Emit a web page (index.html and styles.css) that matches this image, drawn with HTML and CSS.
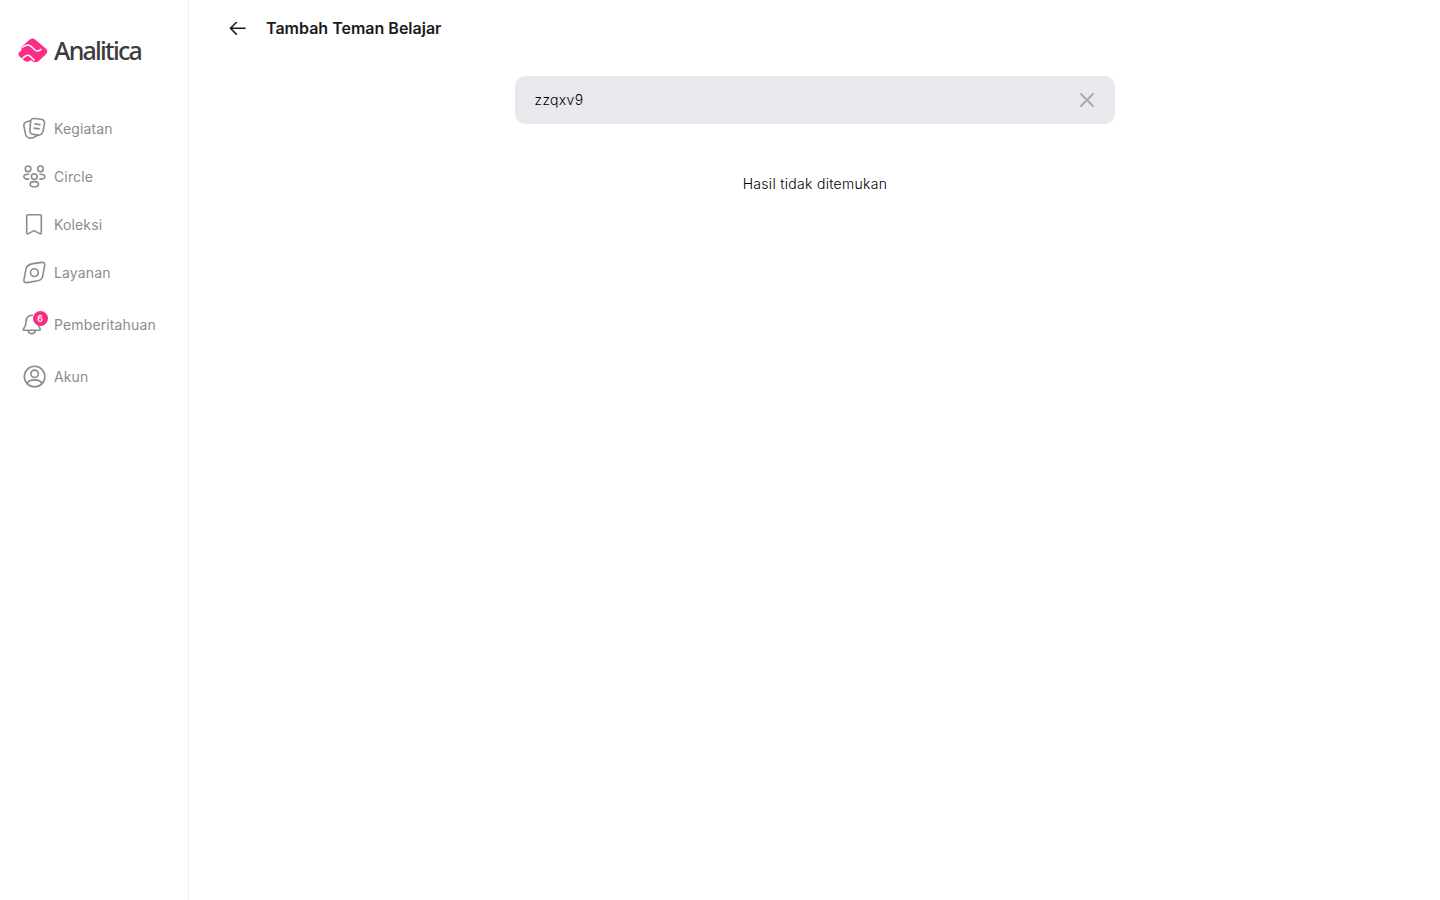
FILE: index.html
```html
<!DOCTYPE html>
<html lang="id">
<head>
    <meta charset="UTF-8">
    <meta name="viewport" content="width=device-width, initial-scale=1.0">
    <title>Tambah Teman Belajar - Analitica</title>
    <link rel="stylesheet" href="styles.css">
</head>
<body>
    <aside class="sidebar">
        <a href="#" class="logo">
            <svg class="logo-mark" width="30" height="26" viewBox="0 0 30 26">
                <path d="M11.500 1.700Q14.500-.7 17.500 1.700L28 10.800Q30.500 13.500 28 16.300L20.500 23.200Q17.500 25.500 14.500 23.200L13 22Q10 25 6.800 23L1.500 18.500Q-.7 16.200 1.500 14L3.500 12.200Q3 10 4.500 8Z" fill="#ff2e85"/>
                <path d="M4.500 9.500Q9.500 4.800 13.500 8.700L17 12Q20 14.500 23.500 11" fill="none" stroke="#fff" stroke-width="1.500"/>
                <path d="M4.500 20.500Q9 15.300 12.500 18.500L16.500 22.500" fill="none" stroke="#fff" stroke-width="1.500"/>
            </svg>
            <span class="logo-text">Analitica</span>
        </a>

        <nav class="menu">
            <a href="#" class="menu-item">
                <svg class="icon" viewBox="-0.3 -0.6 24 24">
                    <path d="M11.800 1.900L18.500 2.700Q22.900 3.300 22.200 7L20.700 14.500Q19.700 18.800 15.700 18.500L11 17.800Q7.200 17.200 7.600 13.500L8.200 5.500Q8.500 1.600 11.800 1.900Z"/>
                    <path d="M8.200 4.200L4.500 5.100Q1.200 6 1.600 9.500L3 16.800Q4 21.200 7.500 21.500Q9.500 21.700 11.800 20.600L16 18.500M12.700 7.300L17.700 8.200M11.800 11.500L16.800 12.300"/>
                </svg>
                <span>Kegiatan</span>
            </a>
            <a href="#" class="menu-item">
                <svg class="icon" viewBox="-0.3 -0.6 24 24">
                    <circle cx="5.800" cy="4.200" r="2.800"/>
                    <circle cx="18.200" cy="4.200" r="2.800"/>
                    <circle cx="12" cy="12" r="2.900"/>
                    <ellipse cx="12" cy="19.600" rx="4.200" ry="2.600"/>
                    <path d="M6.400 9.700Q1.500 9.400 1.500 12.200Q1.700 14.800 6.300 14.500M17.600 9.700Q22.500 9.400 22.500 12.200Q22.300 14.800 17.700 14.500"/>
                </svg>
                <span>Circle</span>
            </a>
            <a href="#" class="menu-item">
                <svg class="icon" viewBox="-0.3 -0.6 24 24">
                    <path d="M5.700 2.200H17.700Q19 2.200 19 3.500V20Q19 21.800 17.400 21L11.700 18L6 21Q4.400 21.800 4.400 20V3.500Q4.400 2.200 5.700 2.200Z"/>
                </svg>
                <span>Koleksi</span>
            </a>
            <a href="#" class="menu-item">
                <svg class="icon" viewBox="-0.3 -0.6 24 24">
                    <path d="M9.500 3.300L19.300 1.800Q22.900 1.500 22.400 4.800L20.400 15.500Q19.700 19.300 15.500 20.200L4.700 22Q1.200 22.300 1.600 19.200L3.700 8.500Q4.500 4.400 9.500 3.300Z"/>
                    <circle cx="12.100" cy="12" r="3.900"/>
                </svg>
                <span>Layanan</span>
            </a>
            <a href="#" class="menu-item menu-item-notif">
                <span class="icon-wrap">
                    <svg class="icon" viewBox="-0.3 -0.6 24 24">
                        <path d="M10 2.600Q4.100 2.700 3.800 9C3.800 13.200 2.500 14.200 1.100 16.300Q.6 17.700 2 17.700H17Q18.400 17.700 17.800 16.300C16.600 14.300 16.200 13 16 9.500M5.800 18Q6.200 21 9.400 21.100Q12.600 21 13 18"/>
                    </svg>
                    <span class="badge">6</span>
                </span>
                <span>Pemberitahuan</span>
            </a>
            <a href="#" class="menu-item">
                <svg class="icon" viewBox="-0.3 -0.6 24 24">
                    <circle cx="12.300" cy="12" r="10.300"/>
                    <circle cx="12.300" cy="9.200" r="3.700"/>
                    <path d="M5 19Q6.500 15.300 12.300 15.300Q18.100 15.300 19.600 19"/>
                </svg>
                <span>Akun</span>
            </a>
        </nav>
    </aside>

    <main class="content">
        <header class="topbar">
            <a href="#" class="back" aria-label="Kembali">
                <svg width="18" height="16" viewBox="0 0 18 16">
                    <path d="M17 8.300H2.700M8.300 2.500L2.400 8.300L8.300 14.100"/>
                </svg>
            </a>
            <h1>Tambah Teman Belajar</h1>
        </header>

        <div class="search">
            <input type="text" class="search-input" value="zzqxv9">
            <button class="clear" aria-label="Hapus">
                <svg width="16" height="16" viewBox="0 0 16 16">
                    <path d="M2 2L14 14M14 2L2 14"/>
                </svg>
            </button>
        </div>

        <p class="empty">Hasil tidak ditemukan</p>
    </main>
</body>
</html>
```
FILE: styles.css
```css
* {
    margin: 0;
    padding: 0;
    box-sizing: border-box;
}

body {
    display: flex;
    min-height: 100vh;
    font-family: Inter, sans-serif;
    font-size: 14px;
    background: #fff;
    color: #1a1a1c;
}

a {
    color: inherit;
    text-decoration: none;
}

/* Sidebar */
.sidebar {
    width: 189px;
    flex-shrink: 0;
    border-right: 1px solid #ededed;
}

.logo {
    display: flex;
    align-items: center;
    gap: 6px;
    height: 104px;
    padding-left: 18px;
}

.logo-mark {
    margin-bottom: 3px;
}

.logo-text {
    margin-bottom: 5px;
    font-family: "Noto Sans", sans-serif;
    font-size: 25px;
    font-weight: 500;
    letter-spacing: -1.75px;
    line-height: 30px;
    color: #3c3c3c;
}

.menu-item {
    display: flex;
    align-items: center;
    gap: 8px;
    height: 48px;
    padding-left: 22px;
    color: #8c8c8c;
    letter-spacing: 0.13px;
}

.menu-item-notif {
    height: 56px;
}

.icon {
    display: block;
    width: 24px;
    height: 24px;
    fill: none;
    stroke: #8c8c8c;
    stroke-width: 1.6;
    stroke-linecap: round;
    stroke-linejoin: round;
    overflow: visible;
}

.icon-wrap {
    position: relative;
}

.badge {
    position: absolute;
    top: -1.5px;
    right: -1.5px;
    width: 15px;
    height: 15px;
    border-radius: 50%;
    background: #f92f7d;
    color: #fff;
    font-size: 9px;
    font-weight: 500;
    line-height: 16px;
    letter-spacing: 0;
    text-align: center;
}

/* Content */
.content {
    flex: 1;
}

.topbar {
    display: flex;
    align-items: center;
    gap: 20px;
    height: 56px;
    padding-left: 39px;
}

.back svg {
    display: block;
    fill: none;
    stroke: #1a1a1c;
    stroke-width: 1.6;
    stroke-linecap: round;
    stroke-linejoin: round;
}

h1 {
    font-size: 16px;
    font-weight: 600;
    line-height: 24px;
}

.search {
    display: flex;
    align-items: center;
    width: 600px;
    height: 48px;
    margin: 20px auto 0;
    padding: 0 20px;
    border-radius: 10px;
    background: #e9e9ed;
}

.search-input {
    flex: 1;
    height: 20px;
    margin-bottom: 1px;
    border: none;
    outline: none;
    background: none;
    font: inherit;
    font-weight: 300;
    line-height: 20px;
    letter-spacing: 0.3px;
    color: #000;
}

.clear {
    border: none;
    background: none;
}

.clear svg {
    display: block;
    stroke: #ababaf;
    stroke-width: 2;
    stroke-linecap: round;
}

.empty {
    margin-top: 50px;
    padding-left: 1px;
    font-weight: 300;
    line-height: 20px;
    letter-spacing: 0.3px;
    text-align: center;
    color: #000;
}
```
